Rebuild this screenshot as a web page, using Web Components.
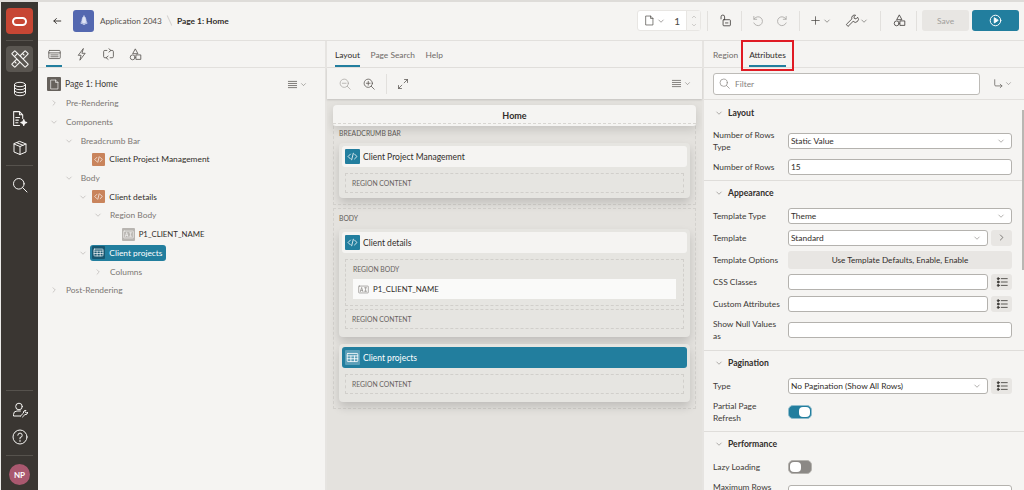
<!DOCTYPE html>
<html lang="en">
<head>
<meta charset="utf-8">
<title>Page Designer</title>
<style>
  html, body { margin: 0; height: 100%; overflow: hidden; background: #f5f4f2; }
  body { font-family: Lato, "Liberation Sans", sans-serif; font-size: 8.4px; color: #312d2a; }
</style>
</head>
<body>
<app-shell>
  <nav-rail slot="rail"></nav-rail>
  <top-bar slot="top"></top-bar>

  <tree-pane slot="left">
    <tree-node level="0" chevron="right">Pre-Rendering</tree-node>
    <tree-node level="0" chevron="down">Components</tree-node>
    <tree-node level="1" chevron="down">Breadcrumb Bar</tree-node>
    <tree-node level="2" badge="code" strong>Client Project Management</tree-node>
    <tree-node level="1" chevron="down">Body</tree-node>
    <tree-node level="2" chevron="down" badge="code" strong>Client details</tree-node>
    <tree-node level="3" chevron="down">Region Body</tree-node>
    <tree-node level="4" badge="field" strong style="font-size: 7.8px">P1_CLIENT_NAME</tree-node>
    <tree-node level="2" chevron="down" badge="table" selected>Client projects</tree-node>
    <tree-node level="3" chevron="right">Columns</tree-node>
    <tree-node level="0" chevron="right">Post-Rendering</tree-node>
  </tree-pane>

  <layout-pane slot="center">
    <page-section label="BREADCRUMB BAR" first>
      <region-card title="Client Project Management" style="--card-pad: 5px">
        <region-box label="REGION CONTENT"></region-box>
      </region-card>
    </page-section>
    <page-section label="BODY">
      <region-card title="Client details">
        <region-box label="REGION BODY" body>
          <field-chip>P1_CLIENT_NAME</field-chip>
        </region-box>
        <region-box label="REGION CONTENT"></region-box>
      </region-card>
      <region-card title="Client projects" selected>
        <region-box label="REGION CONTENT"></region-box>
      </region-card>
    </page-section>
  </layout-pane>

  <props-pane slot="right">
    <prop-section title="Layout" head="25" foot="2">
      <prop-row label="Number of Rows Type" h="31"><prop-select>Static Value</prop-select></prop-row>
      <prop-row label="Number of Rows" h="22"><prop-input value="15"></prop-input></prop-row>
    </prop-section>
    <prop-section title="Appearance" head="24" foot="4">
      <prop-row label="Template Type" h="21"><prop-select>Theme</prop-select></prop-row>
      <prop-row label="Template" h="23" extra="next"><prop-select>Standard</prop-select></prop-row>
      <prop-row label="Template Options" h="22"><option-button>Use Template Defaults, Enable, Enable</option-button></prop-row>
      <prop-row label="CSS Classes" h="22" extra="list"><prop-input></prop-input></prop-row>
      <prop-row label="Custom Attributes" h="21" extra="list"><prop-input></prop-input></prop-row>
      <prop-row label="Show Null Values as" h="32"><prop-input></prop-input></prop-row>
    </prop-section>
    <prop-section title="Pagination" head="24" foot="4">
      <prop-row label="Type" h="22" extra="list"><prop-select>No Pagination (Show All Rows)</prop-select></prop-row>
      <prop-row label="Partial Page Refresh" h="30"><toggle-switch on></toggle-switch></prop-row>
    </prop-section>
    <prop-section title="Performance" head="24" foot="0">
      <prop-row label="Lazy Loading" h="22"><toggle-switch></toggle-switch></prop-row>
      <prop-row label="Maximum Rows to Process" h="30"><prop-input></prop-input></prop-row>
    </prop-section>
  </props-pane>
</app-shell>

<script>
const PATHS = {
  back: '<path d="M14 8H3M7 4 3 8l4 4"/>',
  chevDown: '<path d="m3.5 6 4.5 4.5L12.5 6"/>',
  chevRight: '<path d="m6 3.5 4.5 4.5L6 12.5"/>',
  chevUp: '<path d="M3.5 10 8 5.5l4.5 4.5"/>',
  rocket: '<path d="M8 1.5c2 1.5 2.6 4 2.6 6.5L10 11H6L5.4 8C5.4 5.500 6 3 8 1.500z" fill="currentColor"/><path d="M5.500 8 3.800 11l1.800.5M10.500 8l1.700 3-1.800.5M7 12.500h2" />',
  treeTab: '<rect x="1" y="3" width="14" height="10" rx="1"/><path d="M1 6h14M3.500 8.500h9M3.500 10.800h9"/>',
  bolt: '<path d="M10 1 4 9h3.500L6 15l6.500-8.500H9z"/>',
  sync: '<path d="M6 3H3.500A1.500 1.500 0 0 0 2 4.500v6A1.500 1.500 0 0 0 3.500 12H5M10 12h2.500a1.500 1.500 0 0 0 1.500-1.500v-6A1.500 1.500 0 0 0 12.500 3H11M8.500 1 11 3 8.500 5M7.500 10 5 12l2.500 2"/>',
  shapes: '<path d="M8 1.500 11 7H5z"/><circle cx="4.500" cy="11.500" r="3"/><rect x="9" y="8.500" width="5.500" height="5.500"/>',
  menu: '<path d="M2 3.500h12M2 6.500h12M2 9.500h12M2 12.500h12"/>',
  zoomOut: '<circle cx="7" cy="7" r="5.500"/><path d="m11 11 4 4M4.500 7h5"/>',
  zoomIn: '<circle cx="7" cy="7" r="5.500"/><path d="m11 11 4 4M4.500 7h5M7 4.500v5"/>',
  expand: '<path d="M9.500 6.500 14 2M10 2h4v4M6.500 9.500 2 14M2 10v4h4"/>',
  page: '<path d="M3 1.500h6.500L13 5v9.500H3zM9.500 1.500V5H13"/>',
  lock: '<path d="M2.500 6V3.500a2.200 2.200 0 0 1 4.400 0V7"/><rect x="5" y="7" width="9" height="7.500" rx="1"/><path d="M8 11h3"/>',
  undo: '<path d="M3.500 3v3.500H7"/><path d="M3.700 6.300A5.500 5.500 0 1 1 3.500 11"/>',
  redo: '<path d="M12.500 3v3.500H9"/><path d="M12.300 6.300A5.500 5.500 0 1 0 12.500 11"/>',
  plus: '<path d="M8 2.500v11M2.500 8h11"/>',
  wrench: '<path d="m2 12.500 6.500-6.500a3.500 3.500 0 0 1 4.500-4.500l-2 2 .5 2 2 .5 2-2A3.500 3.500 0 0 1 10 9l-6 6z"/>',
  play: '<circle cx="8" cy="8" r="6.500"/><path d="M6.500 5v6L11 8z" fill="currentColor"/>',
  search: '<circle cx="6.800" cy="6.800" r="5.300"/><path d="m10.600 10.600 4.400 4.400"/>',
  goto: '<path d="M2.500 2.500V10a1.500 1.500 0 0 0 1.500 1.500h9M10.500 9l2.500 2.500-2.500 2.500"/>',
  list: '<circle cx="3" cy="3.500" r="1.300" fill="currentColor"/><circle cx="3" cy="8" r="1.300" fill="currentColor"/><circle cx="3" cy="12.500" r="1.300" fill="currentColor"/><path d="M7 3.500h8M7 8h8M7 12.500h8"/>',
  tools: '<g transform="rotate(45 8 8)"><rect x="6" y="-.5" width="4" height="17" rx=".5"/><path d="M6 3h2M6 6h2M6 10h2M6 13h2"/></g><g transform="rotate(-45 8 8)"><rect x="6" y="-.5" width="4" height="17" rx=".5" fill="#5a5651"/><path d="M6 3h4"/></g>',
  db: '<ellipse cx="8" cy="3.500" rx="5.500" ry="2.200"/><path d="M2.500 3.500v9c0 1.200 2.500 2.200 5.500 2.200s5.500-1 5.500-2.200v-9M2.500 6.500c0 1.200 2.500 2.200 5.500 2.200s5.500-1 5.500-2.200M2.500 9.500c0 1.200 2.500 2.200 5.500 2.200s5.500-1 5.500-2.200"/>',
  pageWand: '<path d="M8 14.500H2.500v-13H8l3 3V8M8 1.500v3h3M4.500 7H8M4.500 9.500H7M4.500 12H6.500"/><path d="m12 9 .8 2 2 .8-2 .8-.8 2-.8-2-2-.8 2-.8z" fill="currentColor"/>',
  box: '<path d="m8 1.500 6 2.500v8l-6 2.500L2 12V4zM2 4l6 2.500L14 4M8 6.500v8M5 2.800l6 2.500"/>',
  userWrench: '<circle cx="7" cy="4.500" r="3.300"/><path d="M8.500 9H5a3.500 3.500 0 0 0-3.500 3.500V14h7"/><path d="m8.500 14 3-3a2 2 0 0 1 2.500-2.500l-1 1 .5 1 1 .5 1-1A2 2 0 0 1 13 12.500l-2.500 2.500"/>',
  help: '<circle cx="8" cy="8" r="7"/><path d="M5.800 6.200A2.200 2.200 0 1 1 8 8.500v1.300M8 11.300v1.200"/>',
  code: '<path d="M5.500 5 2.500 8l3 3M10.500 5l3 3-3 3M9 4 7 12"/>',
  table: '<rect x="1.500" y="3" width="13" height="10" rx=".8"/><path d="M1.500 6h13M1.500 9.500h13M6 6v7M10.500 6v7" />',
  field: '<rect x="1" y="3" width="14" height="10" rx=".8"/><path d="m3.500 11 1.800-6 1.800 6M4.100 9.300h2.400M9.500 5.500h3M11 5.500v5M9.500 10.500h3"/>'
};

class UiIcon extends HTMLElement {
  static get observedAttributes() { return ["name", "size", "sw"]; }
  connectedCallback() { this.render(); }
  attributeChangedCallback() { this.render(); }
  render() {
    if (!this.shadowRoot) this.attachShadow({ mode: "open" });
    const size = this.getAttribute("size") || 12;
    const sw = this.getAttribute("sw") || 1;
    this.shadowRoot.innerHTML = `
      <style>:host { display: inline-flex; flex: none; line-height: 0; } svg { overflow: visible; }</style>
      <svg width="${size}" height="${size}" viewBox="0 0 16 16" fill="none" stroke="currentColor" stroke-width="${sw}" stroke-linecap="round" stroke-linejoin="round">${PATHS[this.getAttribute("name")] || ""}</svg>`;
  }
}
customElements.define("ui-icon", UiIcon);

class Base extends HTMLElement {
  constructor() {
    super();
    this.attachShadow({ mode: "open" });
    this.shadowRoot.innerHTML = this.constructor.markup(this);
  }
}

class AppShell extends Base {
  static markup() { return `
    <style>
      :host { display: grid; height: 488px; border-top: 2px solid #dedcd9; box-sizing: content-box;
              grid-template-columns: 38px 289px 1fr 320px; grid-template-rows: 39px 1fr; overflow: hidden; }
      .rail { grid-row: 1 / 3; display: flex; min-height: 0; }
      .top { grid-column: 2 / 5; display: flex; min-width: 0; }
      .pane { display: flex; min-height: 0; min-width: 0; }
      ::slotted(*) { flex: 1; min-width: 0; }
    </style>
    <div class="rail"><slot name="rail"></slot></div>
    <div class="top"><slot name="top"></slot></div>
    <div class="pane"><slot name="left"></slot></div>
    <div class="pane"><slot name="center"></slot></div>
    <div class="pane"><slot name="right"></slot></div>`; }
}

class NavRail extends Base {
  static markup() { return `
    <style>
      :host { display: flex; flex-direction: column; align-items: center; background: #3a3632; color: #f5f4f2;
              border-left: 1px solid #ecebe9; box-sizing: border-box; padding-top: 6px; }
      .logo, .on { width: 27px; height: 26px; border-radius: 4px; display: grid; place-items: center; flex: none; }
      .logo { background: #c74634; }
      .logo i { display: block; width: 15px; height: 9px; border: 2px solid #fff; border-radius: 5px; box-sizing: border-box; }
      .on { background: #5a5651; }
      hr { width: 27px; height: 1px; margin: 0; border: 0; background: #56524d; flex: none; }
      .slot { height: 30px; display: grid; place-items: center; flex: none; }
      .spring { flex: 1; }
      .np { width: 21px; height: 21px; border-radius: 50%; background: #a9586f; color: #fff; font: 700 8px Lato, sans-serif;
            display: grid; place-items: center; margin: 8px 0 5px; flex: none; }
    </style>
    <div class="logo"><i></i></div>
    <hr style="margin: 6px 0 5px">
    <div class="on"><ui-icon name="tools" size="18" sw="1"></ui-icon></div>
    <div class="slot" style="margin-top: 2px"><ui-icon name="db" size="16"></ui-icon></div>
    <div class="slot" style="margin-top: -1px"><ui-icon name="pageWand" size="17"></ui-icon></div>
    <div class="slot"><ui-icon name="box" size="16"></ui-icon></div>
    <hr style="margin: 2px 0 4px">
    <div class="slot"><ui-icon name="search" size="16"></ui-icon></div>
    <div class="spring"></div>
    <hr style="margin-bottom: 4px">
    <div class="slot"><ui-icon name="userWrench" size="16"></ui-icon></div>
    <div class="slot" style="margin-top: -3px; margin-bottom: 1px"><ui-icon name="help" size="16"></ui-icon></div>
    <hr style="margin-top: 2px">
    <div class="np">NP</div>`; }
}

class TopBar extends Base {
  static markup() { return `
    <style>
      :host { display: flex; align-items: center; height: 39px; box-sizing: border-box; background: #f5f4f2;
              border-bottom: 1px solid #e2e0dd; padding: 0 5px 1px 14px; font-size: 8.4px; }
      .app { width: 21px; height: 22px; border-radius: 3px; background: #5468b0; color: #dfe4f5; display: grid; place-items: center; margin: 0 6px 0 11px; }
      .slash { width: 1px; height: 11px; background: #d5d3d0; transform: rotate(-25deg); margin: 0 7px 0 7px; }
      b { font-weight: 700; }
      .spring { flex: 1; }
      .num { display: flex; align-items: center; width: 64px; height: 21px; box-sizing: border-box; background: #fff; border: 1px solid #e8e6e3; border-radius: 3px; padding-left: 6px; color: #4c4945; }
      .num span { margin-left: auto; margin-right: 6px; font-size: 10px; }
      .spin { width: 13px; height: 100%; border-left: 1px solid #e8e6e3; background: #f5f4f2; display: flex; flex-direction: column; align-items: center; justify-content: center; color: #8a8784; }
      .sep { width: 1px; height: 20px; background: #e2e0dd; flex: none; }
      .tool { display: flex; align-items: center; gap: 2px; color: #3d3a37; }
      .off { color: #a8a5a2; }
      .save, .run { width: 47px; height: 21px; border-radius: 3px; display: grid; place-items: center; }
      .save { background: #e8e6e3; color: #a19e9b; margin-left: 5px; }
      .run { background: #227e9e; color: #fff; margin-left: 3px; }
    </style>
    <ui-icon name="back" size="10" sw="1.500"></ui-icon>
    <div class="app"><ui-icon name="rocket" size="12"></ui-icon></div>
    <span style="color:#55514d;font-size:8.200px">Application 2043</span>
    <i class="slash"></i>
    <b>Page 1: Home</b>
    <div class="spring"></div>
    <div class="num">
      <ui-icon name="page" size="11"></ui-icon><ui-icon name="chevDown" size="8" style="margin-left:2px"></ui-icon>
      <span>1</span>
      <div class="spin"><ui-icon name="chevUp" size="6"></ui-icon><ui-icon name="chevDown" size="6" style="margin-top:2px"></ui-icon></div>
    </div>
    <i class="sep" style="margin: 0 11px 0 6px"></i>
    <div class="tool"><ui-icon name="lock" size="13"></ui-icon></div>
    <i class="sep" style="margin: 0 9px 0 9px"></i>
    <div class="tool off"><ui-icon name="undo" size="13"></ui-icon></div>
    <div class="tool off" style="margin-left: 12px"><ui-icon name="redo" size="13"></ui-icon></div>
    <i class="sep" style="margin: 0 10px 0 10px"></i>
    <div class="tool"><ui-icon name="plus" size="11"></ui-icon><ui-icon name="chevDown" size="8"></ui-icon></div>
    <div class="tool" style="margin-left: 14px"><ui-icon name="wrench" size="13"></ui-icon><ui-icon name="chevDown" size="8"></ui-icon></div>
    <i class="sep" style="margin: 0 12px 0 12px"></i>
    <div class="tool"><ui-icon name="shapes" size="13"></ui-icon></div>
    <i class="sep" style="margin: 0 0 0 10px"></i>
    <div class="save">Save</div>
    <div class="run"><ui-icon name="play" size="13" sw="1.200"></ui-icon></div>`; }
}

class TabStrip extends Base {
  static markup() { return `
    <style>
      :host { display: flex; height: 27px; box-sizing: border-box; border-bottom: 1px solid #e2e0dd; gap: var(--tab-gap, 11px); padding-left: var(--tab-left, 8px); flex: none; }
      ::slotted(*) { display: flex; align-items: center; height: 26px; box-sizing: border-box; color: #6f6b67; font-size: 8.4px; padding-top: 1px; }
      ::slotted(.on) { color: #312d2a; box-shadow: inset 0 -2px 0 #227e9e; }
    </style>
    <slot></slot>`; }
}

class TreePane extends Base {
  static markup() { return `
    <style>
      :host { display: flex; flex-direction: column; background: #f5f4f2; border-right: 2px solid #e6e4e1; box-sizing: border-box; min-height: 0; }
      tab-strip { --tab-gap: 11px; --tab-left: 8px; }
      tab-strip span { width: 16px; justify-content: center; color: #55514d; }
      .head { display: flex; align-items: center; height: 18px; margin: 7px 0 0; padding: 0 18px 0 9px; font-size: 8.600px; color: #3d3a37; }
      .pg { width: 14px; height: 14px; background: #66615c; border-radius: 1px; margin-right: 4px; display: grid; place-items: center; color: #f5f4f2; }
      .tools { margin-left: auto; display: flex; align-items: center; gap: 2px; color: #4c4945; }
      .rows { margin-top: 1px; }
    </style>
    <tab-strip>
      <span class="on"><ui-icon name="treeTab" size="13"></ui-icon></span>
      <span><ui-icon name="bolt" size="13"></ui-icon></span>
      <span><ui-icon name="sync" size="13"></ui-icon></span>
      <span><ui-icon name="shapes" size="13"></ui-icon></span>
    </tab-strip>
    <div class="head">
      <div class="pg"><ui-icon name="page" size="11"></ui-icon></div>Page 1: Home
      <div class="tools"><ui-icon name="menu" size="11"></ui-icon><ui-icon name="chevDown" size="7"></ui-icon></div>
    </div>
    <div class="rows"><slot></slot></div>`; }
}

class TreeNode extends Base {
  static markup(el) {
    const level = Number(el.getAttribute("level") || 0);
    const chevron = el.getAttribute("chevron");
    const badge = el.getAttribute("badge");
    const chev = chevron === "down" ? "chevDown" : "chevRight";
    return `
    <style>
      :host { display: flex; align-items: center; height: 18.700px; color: #7b7773; padding-left: ${10 + level * 14.67}px; }
      :host([strong]), :host([selected]) { color: #312d2a; }
      .c { width: 12px; height: 12px; display: grid; place-items: center; color: #a09d9a; flex: none; }
      .badge { width: 13px; height: 13px; display: grid; place-items: center; margin-right: 4px; flex: none; border-radius: 1px; color: #fff; }
      .badge.code { background: #c9845c; }
      .badge.field { background: #b8b5b1; color: #f5f4f2; }
      .badge.table { background: #17566f; }
      .wrap { display: flex; align-items: center; margin-left: ${badge ? 3 : 6}px; }
      :host([selected]) .wrap { background: #227e9e; color: #fff; height: 16px; padding: 0 4px 0 2px; border-radius: 3px; margin-left: 1px; }
    </style>
    <div class="c">${chevron ? `<ui-icon name="${chev}" size="8"></ui-icon>` : ""}</div>
    <div class="wrap">
      ${badge ? `<div class="badge ${badge}"><ui-icon name="${badge}" size="11"></ui-icon></div>` : ""}
      <span><slot></slot></span>
    </div>`;
  }
}

class LayoutPane extends Base {
  static markup() { return `
    <style>
      :host { display: flex; flex-direction: column; background: #f5f4f2; min-height: 0; border-right: 2px solid #e6e4e1; box-sizing: border-box; }
      tab-strip { --tab-gap: 10.500px; --tab-left: 8px; }
      .bar { display: flex; align-items: center; height: 31px; padding: 0 11px 0 12px; color: #55514d; flex: none; box-sizing: border-box; box-shadow: 0 1px 2px rgba(0,0,0,.15); position: relative; }
      .bar i { width: 1px; height: 20px; background: #e2e0dd; margin: 0 10px 0 11px; }
      .menu { margin-left: auto; display: flex; align-items: center; gap: 2px; }
      .canvas { flex: 1; background: #e4e2de; padding: 6px 6px 0 6px; min-height: 0; overflow: hidden; }
      .home { position: relative; z-index: 1; height: 21px; background: #f5f4f2; border-radius: 4px 4px 3px 3px; display: grid; place-items: center; font-weight: 700; font-size: 9px; box-shadow: 0 4px 10px rgba(0,0,0,.13); }
      .home::after { content: ""; position: absolute; left: 0; right: 0; bottom: 2px; border-bottom: 1px dashed #d8d6d2; }
    </style>
    <tab-strip>
      <span class="on">Layout</span><span>Page Search</span><span>Help</span>
    </tab-strip>
    <div class="bar">
      <ui-icon name="zoomOut" size="12" style="color:#a8a5a2"></ui-icon>
      <ui-icon name="zoomIn" size="12" style="margin-left:12px"></ui-icon>
      <i></i>
      <ui-icon name="expand" size="12"></ui-icon>
      <div class="menu"><ui-icon name="menu" size="11"></ui-icon><ui-icon name="chevDown" size="7"></ui-icon></div>
    </div>
    <div class="canvas">
      <div class="home">Home</div>
      <slot></slot>
    </div>`; }
}

class PageSection extends Base {
  static markup(el) { return `
    <style>
      :host { display: block; border: 1px dashed #d3d1cd; padding: 2px 5px 6px; margin-top: 3px; }
      :host([first]) { border-top: 0; padding-top: 0; margin-top: 0; }
      .label { height: 14px; line-height: 14px; font-size: 6.800px; color: #5f5b57; margin: 0 0 4px; }
      :host([first]) .label { margin-bottom: 3px; }
      .stack { display: flex; flex-direction: column; gap: 7px; }
    </style>
    <div class="label">${el.getAttribute("label")}</div>
    <div class="stack"><slot></slot></div>`; }
}

class RegionCard extends Base {
  static markup(el) {
    const selected = el.hasAttribute("selected");
    return `
    <style>
      :host { display: block; background: #e6e5e1; border-radius: 4px; padding: 3px 3px var(--card-pad, 8px); box-shadow: 0 5px 10px rgba(0,0,0,.16); }
      .head { display: flex; align-items: center; height: 21px; background: #f5f4f2; border-radius: 3px; padding-left: 3px; gap: 3px; font-size: 8.500px; color: #312d2a; margin-bottom: 6px; }
      :host([selected]) .head { background: #227e9e; color: #fff; }
      .ic { width: 15px; height: 15px; background: #227e9e; color: #fff; display: grid; place-items: center; border-radius: 1px; }
      :host([selected]) .ic { background: #5b9fb8; }
      .boxes { display: flex; flex-direction: column; gap: 3px; padding: 0 3px; }
    </style>
    <div class="head">
      <div class="ic"><ui-icon name="${selected ? "table" : "code"}" size="13"></ui-icon></div>
      ${el.getAttribute("title")}
    </div>
    <div class="boxes"><slot></slot></div>`;
  }
}

class RegionBox extends Base {
  static markup(el) { return `
    <style>
      :host { display: block; border: 1px dashed #d1cfcb; min-height: 18px; padding: 0 6px; font-size: 6.800px; color: #66625e; }
      .l { height: 18px; line-height: 18px; }
      :host([body]) { padding: 2px 7px 6px; }
      :host([body]) .l { height: 14px; line-height: 14px; margin-bottom: 3px; }
    </style>
    <div class="l">${el.getAttribute("label")}</div>
    <slot></slot>`; }
}

class FieldChip extends Base {
  static markup() { return `
    <style>
      :host { display: flex; align-items: center; height: 20px; background: #fafaf9; padding-left: 5px; gap: 4px; font-size: 7.800px; color: #312d2a; }
      ui-icon { color: #8a8784; }
    </style>
    <ui-icon name="field" size="11"></ui-icon><slot></slot>`; }
}

class PropsPane extends Base {
  static markup() { return `
    <style>
      :host { display: flex; flex-direction: column; background: #f5f4f2; min-height: 0; position: relative; }
      tab-strip { --tab-gap: 11px; --tab-left: 9px; }
      .filter { display: flex; align-items: center; height: 32px; flex: none; padding: 0 12px 0 9px; border-bottom: 1px solid #e2e0dd; box-sizing: border-box; }
      .box { display: flex; align-items: center; gap: 5px; width: 267px; height: 22px; background: #fff; box-sizing: border-box; border: 1px solid #bdbbb7; border-radius: 3px; padding-left: 5px; color: #85817d; }
      .go { margin-left: auto; display: flex; align-items: center; gap: 1px; color: #55514d; }
      .scroll { flex: 1; min-height: 0; overflow: hidden; position: relative; }
      .thumb { position: absolute; right: 0; top: 10px; width: 2px; height: 160px; background: #b9b7b3; }
      .mark { position: absolute; left: 37px; top: -1px; width: 53px; height: 31px; box-sizing: border-box; border: 2px solid #e01b24; pointer-events: none; }
    </style>
    <tab-strip>
      <span>Region</span><span class="on">Attributes</span>
    </tab-strip>
    <div class="mark"></div>
    <div class="filter">
      <div class="box"><ui-icon name="search" size="11"></ui-icon>Filter</div>
      <div class="go"><ui-icon name="goto" size="11"></ui-icon><ui-icon name="chevDown" size="7"></ui-icon></div>
    </div>
    <div class="scroll"><slot></slot><div class="thumb"></div></div>`; }
}

class PropSection extends Base {
  static markup(el) { return `
    <style>
      :host { display: block; border-bottom: 1px solid #dfddda; padding: 0 12px 0 9px; padding-bottom: ${el.getAttribute("foot") || 0}px; }
      .h { display: flex; align-items: center; gap: 5px; height: ${el.getAttribute("head")}px; font-weight: 700; font-size: 8.600px; color: #312d2a; padding-left: 2px; }
      .h ui-icon { color: #66625e; }
    </style>
    <div class="h"><ui-icon name="chevDown" size="8"></ui-icon>${el.getAttribute("title")}</div>
    <slot></slot>`; }
}

class PropRow extends Base {
  static markup(el) {
    const extra = el.getAttribute("extra");
    const glyph = extra === "next" ? "chevRight" : "list";
    const size = extra === "next" ? 9 : 12;
    return `
    <style>
      :host { display: grid; grid-template-columns: 75px 1fr; align-items: center; height: ${el.getAttribute("h")}px; font-size: 8.4px; color: #3d3a37; }
      .l { line-height: 12px; padding-right: 8px; }
      .c { display: flex; align-items: center; gap: 3px; }
      ::slotted(*) { flex: 1; min-width: 0; }
      .x { width: 21px; height: 16px; background: #e8e6e3; border-radius: 3px; display: grid; place-items: center; color: #3d3a37; flex: none; }
    </style>
    <div class="l">${el.getAttribute("label")}</div>
    <div class="c"><slot></slot>${extra ? `<div class="x"><ui-icon name="${glyph}" size="${size}" sw="1.100"></ui-icon></div>` : ""}</div>`;
  }
}

class PropSelect extends Base {
  static markup() { return `
    <style>
      :host { display: flex; align-items: center; height: 16px; box-sizing: border-box; background: #fff; border: 1px solid #b4b2ae; border-radius: 3px; padding: 0 6px 0 2px; font-size: 8.4px; color: #312d2a; }
      ui-icon { margin-left: auto; color: #66625e; }
    </style>
    <slot></slot><ui-icon name="chevDown" size="8"></ui-icon>`; }
}

class PropInput extends Base {
  static markup(el) { return `
    <style>
      :host { display: flex; align-items: center; height: 16px; box-sizing: border-box; background: #fff; border: 1px solid #b4b2ae; border-radius: 3px; padding: 0 2px; font-size: 8.4px; color: #312d2a; }
    </style>
    <span>${el.getAttribute("value") || ""}</span>`; }
}

class OptionButton extends Base {
  static markup() { return `
    <style>
      :host { display: grid; place-items: center; height: 18px; background: #e8e6e3; border-radius: 3px; font-size: 8.200px; color: #312d2a; }
    </style>
    <slot></slot>`; }
}

class ToggleSwitch extends Base {
  static markup() { return `
    <style>
      :host { display: flex; flex: none !important; width: 24px; height: 14px; box-sizing: border-box; border-radius: 5px; background: #8b8885; border: 1px solid #b4b2ae; padding: 1px; }
      :host([on]) { background: #227e9e; border-color: #8fbccc; justify-content: flex-end; }
      i { display: block; width: 11px; height: 10px; background: #fff; border-radius: 4px; }
    </style>
    <i></i>`; }
}

customElements.define("app-shell", AppShell);
customElements.define("nav-rail", NavRail);
customElements.define("top-bar", TopBar);
customElements.define("tab-strip", TabStrip);
customElements.define("tree-pane", TreePane);
customElements.define("tree-node", TreeNode);
customElements.define("layout-pane", LayoutPane);
customElements.define("page-section", PageSection);
customElements.define("region-card", RegionCard);
customElements.define("region-box", RegionBox);
customElements.define("field-chip", FieldChip);
customElements.define("props-pane", PropsPane);
customElements.define("prop-section", PropSection);
customElements.define("prop-row", PropRow);
customElements.define("prop-select", PropSelect);
customElements.define("prop-input", PropInput);
customElements.define("option-button", OptionButton);
customElements.define("toggle-switch", ToggleSwitch);
</script>
</body>
</html>
